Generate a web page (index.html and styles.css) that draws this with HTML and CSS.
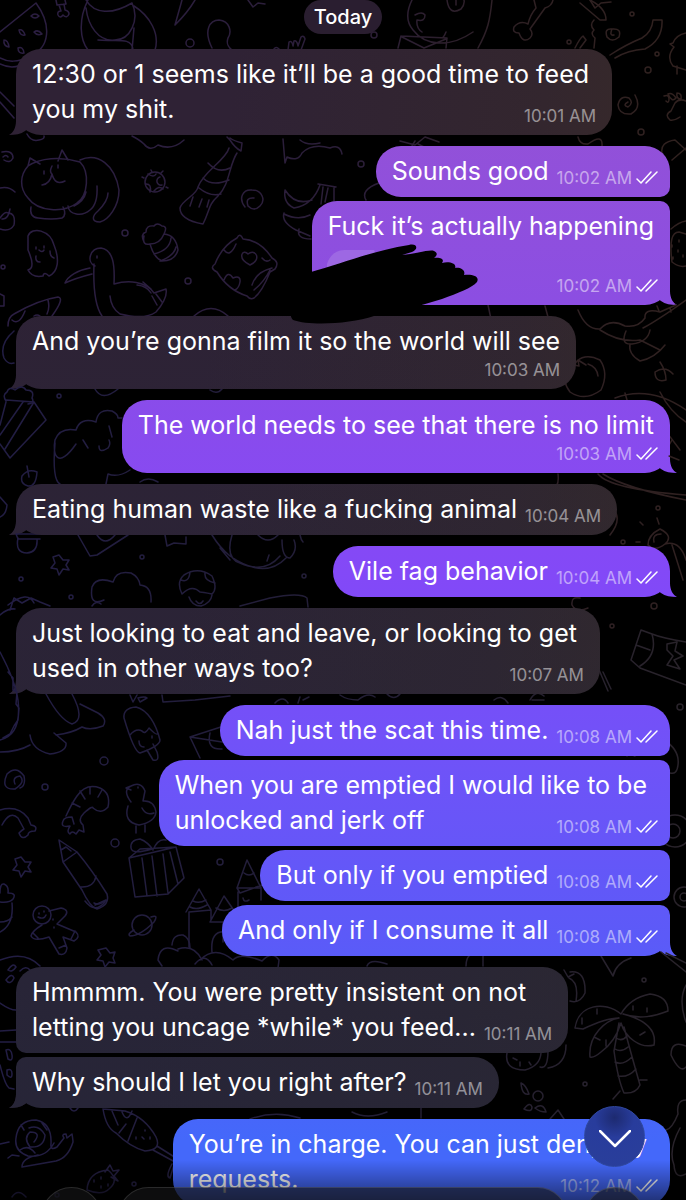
FILE: index.html
```
<!DOCTYPE html>
<html lang="en">
<head>
    <meta charset="UTF-8">
    <meta name="viewport" content="width=device-width, initial-scale=1.0">
    <title>Chat</title>
    <link rel="stylesheet" href="styles.css">
</head>
<body>
    <svg class="wallpaper" viewBox="0 0 686 1200" preserveAspectRatio="xMidYMin slice" aria-hidden="true">
        <defs>
            <linearGradient id="ink" gradientUnits="userSpaceOnUse" x1="0" y1="300" x2="686" y2="220">
                <stop offset="0" stop-color="#2b1e43"/>
                <stop offset="0.55" stop-color="#2b1e38"/>
                <stop offset="0.8" stop-color="#2e2023"/>
                <stop offset="1" stop-color="#30211f"/>
            </linearGradient>
            <linearGradient id="ink-low" gradientUnits="userSpaceOnUse" x1="0" y1="900" x2="686" y2="900">
                <stop offset="0" stop-color="#221d44"/>
                <stop offset="0.6" stop-color="#231e33"/>
                <stop offset="1" stop-color="#29232a"/>
            </linearGradient>
        </defs>
        <g stroke="url(#ink)">
            <!-- watermelon, candy, bear -->
            <path d="M0 32L36 3C52 25 50 48 30 56C18 63 7 62 0 58M0 64C8 68 18 68 28 62"/>
            <path d="M31 16q4-4 8 0q-4 4-8 0M19 30q4-1 6 5q-5 1-6-5M34 32q4-3 8 2q-5 2-8-2M4 40q4 0 5 7q-6-1-5-7M18 48q5-2 6 5q-6 1-6-5"/>
            <path d="M56 0l1 5l9-1l-1-4M59 5l2 6q-4 0-3 4q2 4 5 0q4 4 6-1q0-3-4-4l-1-6"/>
            <path d="M88 0C78 20 80 40 88 50M86 0C94 14 112 15 132 3C140 20 130 40 115 40C98 42 88 25 86 8M134 6C150 16 160 34 155 50M98 40C115 42 132 36 133 50M134 28L132 50"/>
            <path d="M182 0L175 25Q188 12 195 0M212 48C203 30 210 20 219 20C230 21 232 32 228 38C226 44 228 47 232 50"/>
            <path d="M288 50l1-8q3-2 4 4l1-5q3-1 4 5l3-9q3-2 4 2l-4 11M274 49q2-3 5 0"/>
            <!-- cat -->
            <path d="M28 166C20 175 19 188 28 198C38 212 64 213 77 203C88 196 90 172 80 162C60 156 40 158 28 166ZM28 166L30 158L40 164M58 161L62 150L68 160M52 166q-3 6 0 8q-2 10-10 11M52 174q3 12 13 7M44 171v3M58 165v3M80 160C98 152 115 165 119 190C119 207 108 220 100 222C90 222 93 215 98 211C102 207 108 200 108 193M97 186Q98 204 90 210C82 217 69 215 68 206M31 207Q29 217 38 218Q52 220 62 218Q67 215 63 207M86 192Q84 201 74 206"/>
            <path d="M2 152Q13 150 13 158Q10 164 4 160M8 157Q6 154 3 157M0 188Q9 186 15 192M0 218Q5 211 8 213Q16 213 14 225Q10 232 0 229M2 219Q8 220 10 209"/>
            <path d="M0 92L14 106M0 102L14 118M27 134q4 8 12 6q6-1 5-4M132 136q8 4 12 8q6 8 14 1q14 6 26-5"/>
            <circle cx="155" cy="182" r="10"/>
            <path d="M148 174q6 4 8 0M160 177a4 4 0 1 0 2 8M146 184q6 0 4 8M154 191q5-6 9-2M144 178l-2-1M166 187l2 1M152 172l-1-2M161 173l2-2"/>
            <path d="M227 137L230 140Q235 148 241 151L242 143Q234 141 230 138M229 148C226 160 203 172 198 187C197 195 182 200 180 208Q180 220 203 224C210 210 208 205 218 196C230 184 229 165 237 153M208 163Q218 174 230 168M203 178Q212 187 229 180M199 188Q210 197 221 194M193 197l-3 9M202 199l-3 8M209 200l-2 7"/>
            <path d="M245 207C238 198 243 189 252 190C262 190 266 200 260 206Q254 212 248 206Q245 197 254 198"/>
            <path d="M283 139L285 163L287 157Q298 162 302 153Q312 143 330 148Q340 144 342 154M300 140q7 6 20 3"/>
            <!-- bananas -->
            <path d="M318 184L336 187M320 185Q313 205 294 208Q283 203 285 190Q295 206 312 200M334 188V201M328 188L325 202M323 187L321 204M284 213Q281 222 296 230L310 236M284 214Q298 221 310 215M299 229q-3 10 12 10"/>
            <path d="M28 236C32 226 50 230 54 245C60 260 58 272 49 276Q44 271 43 276Q32 278 28 270Q36 268 28 250ZM36 247v2M44 246v2M39 250q3 3 5 0M36 256q-1 6 4 6M50 251q0 6 4 7"/>
            <path d="M144 242Q140 234 146 232Q146 225 154 226Q157 222 162 226Q168 226 164 234Q176 235 178 250Q175 261 162 261Q154 258 150 244Q142 246 144 236M150 244q10 0 14-10M154 254q16-4 17-16M160 261q14-5 16-14"/>
            <path d="M237 238Q240 232 243 239Q260 240 272 258Q280 262 275 269L270 272Q262 292 254 298Q250 300 247 296Q228 290 217 272Q209 268 215 264Q222 246 237 238ZM252 285Q256 272 272 268M254 290Q264 282 270 270M250 265C236 258 243 248 248 254C256 248 262 260 250 265ZM224 250q6 8 12-6M224 280q4-10 9-2q8-3 7 4q-1 6-5 8M262 258q4 5 8 2"/>
            <!-- pelican -->
            <path d="M95 266C86 262 90 248 101 248C113 250 115 264 114 284C128 280 146 281 154 293L166 289Q168 298 156 312Q145 320 120 314Q111 308 110 296M90 268C78 270 68 276 65 283Q76 278 92 274M94 264C93 290 95 306 102 316M97 256v2M137 285q10 1 14 8M143 282l8 7M156 294l6 8M152 296l5 9"/>
            <path d="M8 326Q8 317 14 314Q38 300 58 297Q65 298 52 316M12 320q7 6 13-9M48 300q2 8-1 14M34 316q3-2 6 0M0 294l4 2v10l-4 0M194 316q17-15 34 0"/>
            <!-- dog, envelope, bone, ribbon, paw -->
            <path d="M412 0Q403 18 413 30C425 46 450 48 473 32M492 0C490 20 488 30 478 48M447 0q2 16 14 9q4-5 3-9M415 15q7-4 10 0q0 7-8 5q-1 8 5 12M401 36L447 38L446 48M401 36L398 48M402 37l22 11l22-9M456 0v5M446 32q-2 5-4 6"/>
            <path d="M534 0L536 8Q530 15 528 24Q520 20 514 27Q512 33 519 33Q523 44 530 38Q534 34 530 29L545 8Q552 6 553 0"/>
            <path d="M580 3Q600 20 600 20L606 20Q606 8 590 0M575 48Q580 38 583 36L586 40L580 48M594 20q-5 5 0 10q-4 4 1 8l-1 10M610 55Q625 45 642 38Q652 32 653 20L662 20Q663 40 645 49Q628 50 615 58M612 29Q604 28 607 37Q612 43 619 37Q622 28 612 29Q609 36 614 35"/>
            <path d="M248 0l5 7l5-4l7 1M590 0l5 8l6-5l10-1M686 33Q676 35 673 43L670 44L674 47Q666 57 673 66L686 70M677 66v8"/>
            <path d="M670 120Q664 115 671 111L675 103Q679 98 686 101M670 120Q674 121 680 117M664 96q5-2 5 3t-3 2M668 94q4-2 8 4q-4 5-8-4M677 93q5 0 4 6q-5 0-4-6"/>
            <path d="M635 95Q642 108 631 114Q619 115 618 105Q620 95 629 98Q634 103 628 107Q622 105 628 102M662 153Q660 142 675 140L686 150M672 160L686 148M578 137Q580 145 588 144Q603 133 602 146M400 141l15 4l10-8l14 5M415 141l-3 5M418 144l6 3M366 200Q360 190 379 183"/>
            <!-- berries and flowers -->
            <path d="M671 229Q679 222 686 221M672 262Q668 232 679 232L686 234M672 262Q680 268 686 266M672 245v2M679 240v2M678 250v2M683 255v2M673 257v2M578 310Q586 330 600 329Q610 318 625 326Q638 328 645 318Q644 308 660 312L676 305M643 328Q658 320 686 300M488 305l3 14M545 306l3 11M657 306l2 5M670 308l1 4"/>
            <path d="M600 330Q620 343 640 340L660 350M626 331Q620 345 632 344Q648 342 650 330M630 344Q628 354 640 361Q655 358 665 345M567 369Q561 380 570 392Q585 402 601 390Q609 373 600 360Q586 353 577 361M577 361l-3 4l5 1l-1-6l8 5M588 364q9 3 10 12M660 362Q666 371 666 380Q655 383 655 372Q665 365 673 374"/>
            <path d="M615 398Q650 385 686 410M625 393l2 7M642 405Q662 425 680 450M660 392q10 20 26 30M603 474Q625 488 686 500M598 474Q610 489 686 495M558 474Q560 490 548 490M614 510Q622 520 610 535M672 440l-8 14l15 6"/>
            <path d="M648 545Q648 535 660 529Q674 536 665 544Q655 552 648 545ZM654 542Q652 534 661 534M665 544Q680 540 686 560M672 545L683 580M643 525l-3-3M659 524l-2-6M636 542l4 0M580 598q-9-2-8 7q4 8 16 3"/>
        </g>
        <g stroke="url(#ink-low)">
            <path d="M14 331Q-1 344 4 358Q8 365 14 363M6 401Q2 395 7 392Q9 386 15 390Q22 384 26 390Q35 390 32 398Q35 403 28 404M6 400L34 402L46 420L10 458L0 444M6 402L0 425M23 402L0 435M34 402L5 449M95 389Q102 402 118 389M210 390q7 5 12-1"/>
            <path d="M76 444C58 470 52 455 55 440Q60 427 76 430Q80 417 96 422Q98 408 112 411Q118 414 118 418L122 418M55 443Q52 480 60 484M83 440l5 8M109 426l3 11M108 448Q99 454 99 446M108 448Q111 444 109 440M130 470Q118 478 108 474L106 484M140 482q8-6 18 0"/>
            <path d="M37 472Q28 468 22 476Q20 484 28 486Q36 487 37 472M27 466l2 11M0 497l7 8Q6 515 0 517M16 534L40 534M18 538Q15 553 27 553Q38 552 37 539M16 534L18 539L40 539"/>
            <path d="M78 535L90 556L97 555L128 535M97 535Q105 547 115 535M165 535l2 11l7-3l12 1l0-7M212 535Q220 548 230 556Q265 580 286 558M220 548L230 560M232 535Q225 558 240 563Q265 574 280 556M258 535q10 10 20 0M282 540Q282 558 290 558Q298 550 294 540M300 535q1 5 3 7M269 555l-2 6"/>
            <path d="M59 555l4 5l6 0l-3 5l3 5l-6-1l-4 6l-2-6l-6-1l4-5l-2-6ZM104 600Q89 607 92 587Q96 576 113 582Q116 570 131 573Q139 577 140 585Q152 586 151 602M92 606q4-6 9-2M8 605Q28 590 34 603M10 610L14 598L22 603L31 598L40 602L50 606M0 615q8-7 15-6"/>
            <path d="M182 594Q176 582 184 575Q198 566 212 576Q218 589 212 594Q202 592 200 592Q192 584 182 594ZM189 597Q192 606 201 606Q211 603 212 595M181 580q8 3 9-8M205 573q-1 8 10 10M196 601q4 5 7 0M240 606L270 598Q300 592 307 598L308 607"/>
            <!-- dinosaur tail, ice cream -->
            <path d="M0 652Q15 680 18 700Q22 735 0 740M8 672l5 6l0 12l4 2l-1 12l3 4l-1 12l-4 6l-4 8l-7 4M46 694Q60 720 72 724Q86 720 72 694M80 704L98 713Q108 719 103 726Q90 731 82 727Q72 733 56 735M30 735Q32 750 50 754Q67 752 66 743Q60 738 54 733M0 752Q18 752 30 745M130 695l3 7l4-7M138 698q7-2 9 0l-7 4ZM162 695L163 702L195 700L230 696"/>
            <path d="M124 718Q123 708 136 707C148 710 156 724 160 740Q160 746 140 753Q134 752 124 718ZM130 735Q136 728 142 731Q145 735 149 728Q156 735 157 734M147 750L153 760Q160 762 157 752L153 744M139 741q0 6 5 6M152 736v2"/>
            <path d="M20 788Q26 786 24 776Q16 765 7 774Q0 790 15 789Q26 782 20 776Q12 777 15 784M190 737L227 725L237 732M190 737L200 758M190 737L235 744M210 733Q206 750 222 749M0 810Q18 805 28 818L31 825Q38 826 35 831Q28 831 28 835Q22 841 19 833Q22 830 24 829L18 818Q10 810 2 825"/>
            <!-- shrimp, duck -->
            <path d="M66 816Q72 803 77 796Q86 783 100 788Q111 793 108 807Q101 815 93 808Q93 805 84 813Q77 820 83 825L84 832L79 830L76 834Q72 830 70 834Q66 832 70 826Q60 828 63 821Q64 817 72 817L74 824M72 803l8 4M80 791l5 8M90 787v7M102 790l-4 7"/>
            <path d="M131 802Q122 790 131 786Q141 781 145 791L143 801Q154 800 156 812Q155 822 139 825Q123 822 128 806M131 786L126 788L131 790M142 808q4 8 12 5M136 826v7M145 825v7M138 787v1"/>
            <path d="M59 840L77 852Q92 870 107 894Q110 905 97 909Q90 907 82 890L63 862ZM61 850l5-3l5 4M63 862l14-10M80 887Q94 888 96 876M94 903q5 3 13-3"/>
            <path d="M129 858L176 847L184 878L168 894L135 897ZM129 858L140 849Q160 848 176 847M142 858L147 896M152 856L157 896M163 854L168 893M170 852L178 884M152 849Q132 855 131 848Q130 840 140 839Q148 842 153 850Q158 838 166 840M21 857l4 5l6 0l-3 5l3 5l-6-1l-4 6l-2-6l-6-1l4-5l-2-6Z"/>
            <path d="M237 888L247 860L261 888ZM237 888L240 893L262 885M238 892V915L248 918M261 887V900M244 873q5 4 10 0M189 947V912L211 910V920M186 912L199 889L211 910M193 901q6 3 13-1M190 907q7 4 17-2M224 896L210 922H242ZM216 908q8 5 16 0M223 922V942M243 898q1 5 6 2"/>
            <!-- castle cloud, gingerbread man, planets -->
            <path d="M172 945Q173 934 183 935Q190 938 190 948M178 951Q160 942 158 960L162 966M178 949Q194 944 202 960M212 965Q205 952 195 964M200 960Q215 945 233 960Q240 952 262 961Q272 950 279 960L278 968M212 952Q210 930 226 932"/>
            <circle cx="42" cy="915" r="9"/>
            <path d="M49 911L61 908Q70 910 65 916L57 924L76 932Q81 937 74 941L63 937L67 948Q66 956 59 954L49 937Q34 942 31 936Q32 931 42 925M39 913v1M44 911v1M38 917q6 3 8-2M53 919v1M54 927v1M59 948l7-3M71 939l4-8M33 933l5 5"/>
            <path d="M0 893Q0 883 4 884Q9 886 8 893Q17 893 13 899Q10 903 0 902M12 903Q14 925 0 932M0 922q8 0 12-5M85 901q10 13 20 1M95 905l11-5"/>
            <circle cx="142" cy="925" r="10"/>
            <path d="M134 930Q127 934 130 936Q140 936 154 922Q159 914 151 917M0 960Q25 950 40 966M8 970q5-8 8-3q-4 6-8 3M6 980q6-8 8-2q-4 8-8 2M20 971q6-6 10-1M0 1003Q10 1010 16 1010M106 948l4 5l5-1l-2 6l2 5l-6-1l-4 5l-2-6l-6-1l4-5l-3-5Z"/>
            <path d="M0 1031L16 1030M0 1042H16M6 1050q5-2 6 5t-4 4ZM7 1070q5-2 5 4t-5 1ZM0 1065Q5 1085 9 1088L14 1089"/>
            <!-- snail, drumstick, strawberry -->
            <path d="M54 1143Q46 1158 28 1156Q14 1151 16 1138Q18 1120 36 1120Q52 1123 51 1144Q50 1151 57 1147L64 1138Q61 1134 66 1134L67 1138L72 1134Q73 1140 73 1142Q68 1158 56 1161L22 1167Q22 1158 38 1155M20 1150Q28 1144 35 1153M34 1142Q42 1132 30 1132Q23 1138 30 1147Q44 1148 45 1135Q39 1124 29 1128M21 1125l3 5M42 1123l5 7M0 1144l9-2M8 1158l4-3l7 1"/>
            <path d="M103 1109Q106 1128 116 1133Q130 1147 145 1151Q162 1150 156 1137Q145 1117 125 1111L103 1109M112 1111L118 1125M122 1112Q127 1124 132 1111M126 1124L119 1133M137 1118L128 1141M153 1150L175 1162L170 1178Q165 1177 172 1164M157 1146L176 1158M142 1137l2 2M150 1137v2M145 1130v1M136 1137v2"/>
            <path d="M87 1190Q88 1172 108 1170Q120 1180 109 1189Q102 1196 87 1190ZM105 1172L110 1165L113 1171L119 1170L114 1176L118 1181L111 1177M94 1180v2M101 1177v2M101 1186v2M108 1184v2M12 1197q6-9 14 0M70 1108q4 6 8 0M250 1119Q275 1110 300 1118"/>
            <!-- carton, palm -->
            <path d="M631 660L641 630L652 634Q662 638 686 642M631 660L640 668L686 685M652 634Q658 655 640 666M636 645L650 650M667 644L677 642L675 651L683 656L674 660L680 669L667 665L673 656L667 650ZM597 665L608 691M603 672L611 689M664 740Q680 750 678 765Q677 775 670 773"/>
            <circle cx="675" cy="831" r="16"/><circle cx="673" cy="831" r="7"/><circle cx="684" cy="897" r="10"/><circle cx="684" cy="897" r="4"/>
            <path d="M340 695q7 5 18 5q10-8 17-3M387 694q7 7 13 0M494 700q8-6 14 3M530 700q6-11 14-4M532 700h12M275 703q8-8 13 0M300 697l-2 6M303 700l6-3M635 756q-8-4-8 0"/>
            <path d="M367 966Q370 958 387 964M466 966Q466 958 470 955M483 966V955M601 956L613 976Q616 963 631 958M564 970l4 7l6-3M570 972Q586 970 585 993Q580 1004 570 1001M569 978Q579 982 576 1001M686 972L661 952M686 963L666 953M686 985Q678 1000 686 1022"/>
            <path d="M621 1014C604 1000 578 1005 575 1028L583 1029Q606 1018 619 1018C606 1020 588 1035 590 1057Q594 1058 601 1052Q615 1042 621 1023C625 1037 640 1049 654 1045Q658 1023 623 1014C640 1020 655 1016 668 1011Q668 996 650 994Q630 998 621 1014ZM619 1023L614 1051Q618 1080 624 1093Q636 1094 640 1085Q630 1050 624 1027M616 1038q6 4 11-2M615 1049q6 4 13-2M615 1062q8 4 17-5M618 1076q10 2 18-7M640 1080h7M620 1091l-7 8M582 1024v-6M597 1014v-5M633 1010v-4M647 1012v-4M600 1040l-6-3M640 1035l5-3M606 1046v-6"/>
            <path d="M507 1053Q504 1070 525 1070Q540 1066 541 1053M513 1058l4 2M520 1062v4M529 1062l2 3M540 1067Q548 1070 548 1050M548 1068Q566 1065 566 1045M521 1083Q526 1085 529 1094Q522 1096 521 1083M524 1109q6-8 8-2q0 6-8 2M535 1108q8-6 11 4q-6 0-11-4M550 1119l8-9l6 9M686 1046Q671 1040 671 1055Q680 1074 686 1067M686 1100q-10 0-8 14q-6 15-12 16M680 1128Q668 1150 674 1165Q675 1180 686 1174M421 1108v10M352 1112q15 8 35 0"/>
            <circle cx="538" cy="1096" r="5"/>
        </g>
        <g stroke="url(#ink)">
            <circle cx="190" cy="43" r="4"/><circle cx="125" cy="233" r="3"/><circle cx="188" cy="281" r="3"/><circle cx="3" cy="267" r="2"/><circle cx="374" cy="35" r="3"/><circle cx="361" cy="164" r="3"/><circle cx="632" cy="14" r="2"/><circle cx="569" cy="42" r="2"/><circle cx="657" cy="54" r="2"/><circle cx="648" cy="70" r="3"/><circle cx="641" cy="132" r="3"/><circle cx="658" cy="508" r="2"/><circle cx="623" cy="542" r="2"/><circle cx="654" cy="606" r="3"/><circle cx="612" cy="626" r="2"/>
        </g>
        <g stroke="url(#ink-low)">
            <circle cx="59" cy="396" r="2"/><circle cx="142" cy="557" r="2"/><circle cx="21" cy="579" r="2"/><circle cx="71" cy="597" r="2"/><circle cx="304" cy="576" r="2"/><circle cx="104" cy="761" r="4"/><circle cx="45" cy="787" r="3"/><circle cx="115" cy="843" r="4"/><circle cx="220" cy="862" r="3"/><circle cx="134" cy="1184" r="2"/><circle cx="680" cy="707" r="3"/><circle cx="644" cy="980" r="2"/><circle cx="585" cy="1084" r="2"/><circle cx="57" cy="1195" r="2"/>
        </g>
    </svg>

    <svg class="sprite" aria-hidden="true">
        <symbol id="read" viewBox="0 0 22 14">
            <path d="M1 8L5 12L15 1M10 12L21 1"/>
        </symbol>
    </svg>

    <main class="chat">
        <div class="date">Today</div>

        <div class="group in">
            <div class="bubble tail long">
                <p>12:30 or 1 seems like it’ll be a good time to feed</p>
                <div class="last"><p>you my shit.</p><span class="meta">10:01 AM</span></div>
            </div>
        </div>

        <div class="group out">
            <div class="bubble">
                <div class="last"><p>Sounds good</p><span class="meta">10:02 AM<svg><use href="#read"/></svg></span></div>
            </div>
            <div class="bubble tail">
                <p>Fuck it’s actually happening</p>
                <div class="redacted">
                    <svg viewBox="0 0 200 84" aria-hidden="true">
                        <path class="patch" d="M37 22Q41 9 54 8H84L92 24L37 40Z"/>
                        <path d="M21 30C50 22 85 8 119 3C127 1 129 7 122 10L112 13C125 12 140 7 144 9C149 11 146 15 144 16C150 15 155 17 152 21C160 19 167 22 165 26C170 25 176 28 174 33C182 32 190 34 187 40C182 46 168 51 152 57C130 64 106 70 84 74C60 82 20 84 3 78C-3 72 6 66 3 61L0 56L21 55Z"/>
                    </svg>
                </div>
                <div class="last"><span class="meta">10:02 AM<svg><use href="#read"/></svg></span></div>
            </div>
        </div>

        <div class="group in">
            <div class="bubble tail">
                <p>And you’re gonna film it so the world will see</p>
                <div class="last"><span class="meta">10:03 AM</span></div>
            </div>
        </div>

        <div class="group out">
            <div class="bubble tail">
                <p>The world needs to see that there is no limit</p>
                <div class="last"><span class="meta">10:03 AM<svg><use href="#read"/></svg></span></div>
            </div>
        </div>

        <div class="group in">
            <div class="bubble tail">
                <div class="last"><p>Eating human waste like a fucking animal</p><span class="meta">10:04 AM</span></div>
            </div>
        </div>

        <div class="group out">
            <div class="bubble tail">
                <div class="last"><p>Vile fag behavior</p><span class="meta">10:04 AM<svg><use href="#read"/></svg></span></div>
            </div>
        </div>

        <div class="group in">
            <div class="bubble tail long">
                <p>Just looking to eat and leave, or looking to get</p>
                <div class="last"><p>used in other ways too?</p><span class="meta">10:07 AM</span></div>
            </div>
        </div>

        <div class="group out">
            <div class="bubble">
                <div class="last"><p>Nah just the scat this time.</p><span class="meta">10:08 AM<svg><use href="#read"/></svg></span></div>
            </div>
            <div class="bubble long">
                <p>When you are emptied I would like to be</p>
                <div class="last"><p>unlocked and jerk off</p><span class="meta">10:08 AM<svg><use href="#read"/></svg></span></div>
            </div>
            <div class="bubble">
                <div class="last"><p>But only if you emptied</p><span class="meta">10:08 AM<svg><use href="#read"/></svg></span></div>
            </div>
            <div class="bubble tail">
                <div class="last"><p>And only if I consume it all</p><span class="meta">10:08 AM<svg><use href="#read"/></svg></span></div>
            </div>
        </div>

        <div class="group in">
            <div class="bubble">
                <p>Hmmmm. You were pretty insistent on not</p>
                <div class="last"><p>letting you uncage *while* you feed...</p><span class="meta">10:11 AM</span></div>
            </div>
            <div class="bubble tail">
                <div class="last"><p>Why should I let you right after?</p><span class="meta">10:11 AM</span></div>
            </div>
        </div>

        <div class="group out">
            <div class="bubble long">
                <p>You’re in charge. You can just deny my</p>
                <div class="last"><p>requests.</p><span class="meta">10:12 AM<svg><use href="#read"/></svg></span></div>
            </div>
        </div>
    </main>

    <div class="fade"></div>
    <button class="scroll-down" type="button" aria-label="Scroll to bottom">
        <svg viewBox="0 0 32 18"><path d="M1 1L16 16L31 1"/></svg>
    </button>
    <form class="composer">
        <button type="button" aria-label="Attach">
            <svg viewBox="0 0 24 36"><path d="M4 12V8C4 -1 18 -1 18 8V26C18 34 6 34 6 26"/></svg>
        </button>
        <input type="text" aria-label="Message" autocomplete="off">
        <button type="button" aria-label="Record voice message">
            <svg viewBox="0 0 24 36"><rect x="6" y="1" width="12" height="20" rx="6"/><path d="M1 14C1 30 23 30 23 14M12 26V34"/></svg>
        </button>
    </form>
</body>
</html>
```
FILE: styles.css
```
* {
    box-sizing: border-box;
}
body {
    margin: 0;
    height: 100vh;
    overflow: hidden;
    position: relative;
    background-color: #000;
    color: #fff;
    font-family: Inter, "Liberation Sans", sans-serif;
    font-size: 25px;
    line-height: 35px;
}
p {
    margin: 0;
    white-space: nowrap;
}
.wallpaper {
    position: absolute;
    top: 0;
    left: 0;
    width: 100%;
    height: 100%;
    fill: none;
    stroke-width: 1.5;
    stroke-linecap: round;
    stroke-linejoin: round;
}
.sprite {
    position: absolute;
    width: 0;
    height: 0;
}

/* messages */
.chat {
    position: relative;
    display: flex;
    flex-direction: column;
    gap: 11px;
    padding: 0 16px;
}
.date {
    align-self: center;
    margin-bottom: 4px;
    padding: 0 10px;
    height: 34px;
    line-height: 34px;
    border-radius: 17px;
    background-color: #2a1e30;
    font-size: 20px;
    font-weight: 500;
}
.group {
    display: flex;
    flex-direction: column;
    align-items: flex-start;
    gap: 4px;
}
.group.out {
    align-items: flex-end;
}
.bubble {
    position: relative;
    padding: 8px 16px;
    border-radius: 25px;
}
.in .bubble,
.in .bubble::after {
    background: linear-gradient(rgba(36, 38, 56, 0) 10%, rgba(36, 38, 56, 0.8)) fixed, linear-gradient(95deg, #2f2235 30%, #33262e 70%, #382a28 88%) fixed;
}
.out .bubble,
.out .bubble::after {
    background: linear-gradient(#9552d4 5%, #8c4ee2 25%, #8649f5 44%, #8149f8 50%, #7152f8 62%, #5c5af8 78%, #4468fa 95%) fixed;
}
.in .bubble:not(:last-child) {
    border-bottom-left-radius: 10px;
}
.in .bubble + .bubble {
    border-top-left-radius: 10px;
}
.out .bubble:not(:last-child) {
    border-bottom-right-radius: 10px;
}
.out .bubble + .bubble {
    border-top-right-radius: 10px;
}
.tail::after {
    content: "";
    position: absolute;
    z-index: -1;
    bottom: 0;
    width: 27px;
    height: 26px;
}
.in .tail::after {
    left: -7px;
    clip-path: path("M7 0V12C7 19 4 24 0 26C6 26 12 25 16 22L27 14V0Z");
}
.out .tail::after {
    right: -7px;
    clip-path: path("M20 0V12C20 19 23 24 27 26C21 26 15 25 11 22L0 14V0Z");
}
.long > p {
    padding-right: 7px;
}
.last {
    display: flex;
    align-items: flex-end;
    justify-content: space-between;
    gap: 8px;
}
.meta {
    display: flex;
    align-items: center;
    gap: 4px;
    height: 22px;
    margin-left: auto;
    color: rgba(255, 255, 255, 0.5);
    font-size: 17px;
    line-height: 22px;
    white-space: nowrap;
}
.out .meta {
    margin-right: -4px;
}
.meta svg {
    width: 22px;
    height: 14px;
    fill: none;
    stroke: #fff;
    stroke-width: 1.5;
    stroke-linecap: round;
    stroke-linejoin: round;
}
.redacted {
    height: 31px;
}
.redacted svg {
    position: absolute;
    z-index: 1;
    top: 41px;
    left: -22px;
    width: 200px;
    height: 84px;
    fill: #000;
}
.redacted .patch {
    fill: #9d68e3;
}

/* controls over the chat */
.fade {
    position: absolute;
    right: 0;
    bottom: 0;
    left: 0;
    height: 40px;
    background: linear-gradient(rgba(0, 0, 0, 0), rgba(0, 0, 0, 0.5));
}
.scroll-down {
    position: absolute;
    right: 41px;
    bottom: 33px;
    width: 61px;
    height: 61px;
    padding: 0;
    border: 1px solid #2f479f;
    border-radius: 50%;
    background: radial-gradient(circle at 50% 18%, #1d2a70, #283c9c 35%, #2a3f9a);
}
.scroll-down svg {
    display: block;
    width: 32px;
    height: 18px;
    margin: 4px auto 0;
    fill: none;
    stroke: #fff;
    stroke-width: 2.5;
    stroke-linecap: round;
    stroke-linejoin: round;
}
.composer {
    position: absolute;
    right: 41px;
    bottom: -48px;
    left: 41px;
    display: flex;
    gap: 16px;
}
.composer button,
.composer input {
    height: 61px;
    border: 1px solid rgba(255, 255, 255, 0.12);
    border-radius: 31px;
    background-color: rgba(22, 22, 24, 0.6);
    color: #fff;
}
.composer input {
    flex: 1;
    min-width: 0;
    padding: 0 20px;
    font: inherit;
}
.composer button {
    width: 61px;
    padding: 10px 0 0;
}
.composer svg {
    width: 24px;
    height: 36px;
    fill: none;
    stroke: #fff;
    stroke-width: 2;
}
```
